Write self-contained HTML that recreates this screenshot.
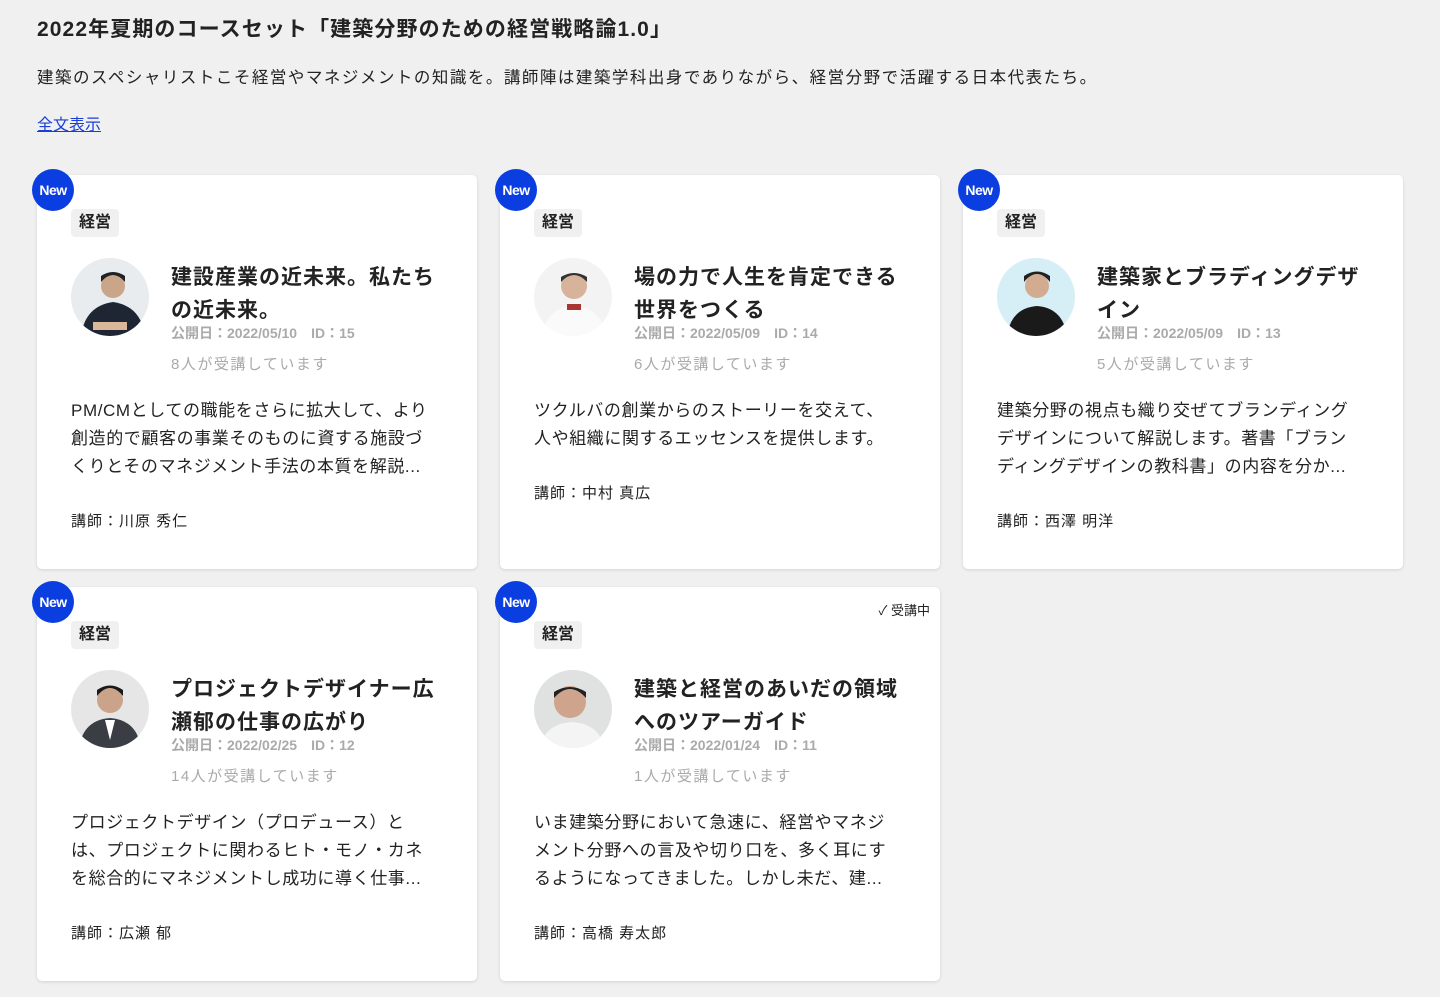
<!DOCTYPE html>
<html><head><meta charset="utf-8"><style>
*{box-sizing:border-box;margin:0;padding:0}
body{width:1440px;height:997px;background:#f0f0f0;font-family:"Liberation Sans","Noto Sans CJK JP",sans-serif;color:#222;position:relative;overflow:hidden}
h1{position:absolute;left:37px;top:13px;font-size:21px;font-weight:bold;color:#222;letter-spacing:1.1px}
.sub{position:absolute;left:37px;top:64px;font-size:16.5px;color:#222;letter-spacing:1.5px}
.link{position:absolute;left:37px;top:111px;font-size:16px;color:#1a3fd6;text-decoration:underline}
.card{position:absolute;width:440px;height:394px;background:#fff;border-radius:5px;box-shadow:0 1px 3px rgba(0,0,0,.12)}
.new{position:absolute;left:-5px;top:-6px;width:42px;height:42px;border-radius:50%;background:#0a3ee0;color:#fff;font-weight:bold;font-size:14px;line-height:42px;text-align:center;letter-spacing:-.5px}
.tag{position:absolute;left:34px;top:34px;height:28px;padding:0 8px;background:#f0f0f0;border-radius:4px;font-size:16px;font-weight:bold;line-height:28px}
.av{position:absolute;left:34px;top:83px;width:78px;height:78px;border-radius:50%;overflow:hidden}
.title{position:absolute;left:134px;top:86px;width:272px;font-size:21px;font-weight:bold;line-height:33px;color:#222;letter-spacing:1px}
.meta{position:absolute;left:134px;top:148px;font-size:14px;font-weight:bold;color:#aaa}
.cnt{position:absolute;left:134px;top:178px;font-size:15px;color:#aaa;letter-spacing:1.5px}
.desc{position:absolute;left:34px;top:222px;width:366px;font-size:17px;line-height:28px;color:#222;letter-spacing:.6px}
.ins{position:absolute;left:34px;font-size:15px;color:#222;letter-spacing:1px}
.taking{position:absolute;right:10px;top:13px;font-size:13px;color:#222}
</style></head><body>
<h1>2022年夏期のコースセット「建築分野のための経営戦略論1.0」</h1>
<div class="sub">建築のスペシャリストこそ経営やマネジメントの知識を。講師陣は建築学科出身でありながら、経営分野で活躍する日本代表たち。</div>
<div class="link">全文表示</div>

<div class="card" style="left:37px;top:175px">
<div class="new">New</div><div class="tag">経営</div>
<div class="av"><svg width="78" height="78"><rect width="78" height="78" fill="#e8ecef"/><circle cx="42" cy="28" r="12" fill="#c9a58a"/><path d="M30 24q12-14 24 0v-6q-12-8-24 0z" fill="#222"/><path d="M10 78q4-30 32-34q28 4 32 34z" fill="#1f2633"/><rect x="22" y="64" width="34" height="8" fill="#d9b89a"/></svg></div>
<div class="title">建設産業の近未来。私たちの近未来。</div>
<div class="meta">公開日：2022/05/10　ID：15</div>
<div class="cnt">8人が受講しています</div>
<div class="desc">PM/CMとしての職能をさらに拡大して、より創造的で顧客の事業そのものに資する施設づくりとそのマネジメント手法の本質を解説...</div>
<div class="ins" style="top:335px">講師：川原 秀仁</div>
</div>

<div class="card" style="left:500px;top:175px">
<div class="new">New</div><div class="tag">経営</div>
<div class="av"><svg width="78" height="78"><rect width="78" height="78" fill="#f3f3f3"/><circle cx="40" cy="28" r="13" fill="#d6b39a"/><path d="M27 24q13-14 26 0v-5q-13-8-26 0z" fill="#333"/><path d="M8 78q4-28 32-30q28 2 32 30z" fill="#fafafa"/><rect x="33" y="46" width="14" height="6" fill="#a33"/></svg></div>
<div class="title">場の力で人生を肯定できる世界をつくる</div>
<div class="meta">公開日：2022/05/09　ID：14</div>
<div class="cnt">6人が受講しています</div>
<div class="desc">ツクルバの創業からのストーリーを交えて、人や組織に関するエッセンスを提供します。</div>
<div class="ins" style="top:307px">講師：中村 真広</div>
</div>

<div class="card" style="left:963px;top:175px">
<div class="new">New</div><div class="tag">経営</div>
<div class="av"><svg width="78" height="78"><rect width="78" height="78" fill="#d6eef5"/><circle cx="40" cy="28" r="12" fill="#d2ab90"/><path d="M27 24q13-16 26 0v-6q-13-9-26 0z" fill="#222"/><path d="M10 78q4-28 30-30q26 2 30 30z" fill="#1a1a1a"/></svg></div>
<div class="title">建築家とブラディングデザイン</div>
<div class="meta">公開日：2022/05/09　ID：13</div>
<div class="cnt">5人が受講しています</div>
<div class="desc">建築分野の視点も織り交ぜてブランディングデザインについて解説します。著書「ブランディングデザインの教科書」の内容を分か...</div>
<div class="ins" style="top:335px">講師：西澤 明洋</div>
</div>

<div class="card" style="left:37px;top:587px">
<div class="new">New</div><div class="tag">経営</div>
<div class="av"><svg width="78" height="78"><rect width="78" height="78" fill="#e6e6e6"/><circle cx="39" cy="30" r="13" fill="#caa38a"/><path d="M26 26q13-16 26 0v-6q-13-9-26 0z" fill="#1a1a1a"/><path d="M8 78q4-28 31-30q27 2 31 30z" fill="#3a3d44"/><path d="M34 50l5 20l5-20z" fill="#fff"/></svg></div>
<div class="title">プロジェクトデザイナー広瀬郁の仕事の広がり</div>
<div class="meta">公開日：2022/02/25　ID：12</div>
<div class="cnt">14人が受講しています</div>
<div class="desc">プロジェクトデザイン（プロデュース）とは、プロジェクトに関わるヒト・モノ・カネを総合的にマネジメントし成功に導く仕事...</div>
<div class="ins" style="top:335px">講師：広瀬 郁</div>
</div>

<div class="card" style="left:500px;top:587px">
<div class="new">New</div><div class="taking">✓ 受講中</div><div class="tag">経営</div>
<div class="av"><svg width="78" height="78"><rect width="78" height="78" fill="#dfe2e0"/><circle cx="36" cy="32" r="16" fill="#cfa48c"/><path d="M20 28q16-18 32 0v-6q-16-10-32 0z" fill="#222"/><path d="M6 78q4-24 32-26q28 2 32 26z" fill="#f4f4f4"/></svg></div>
<div class="title">建築と経営のあいだの領域へのツアーガイド</div>
<div class="meta">公開日：2022/01/24　ID：11</div>
<div class="cnt">1人が受講しています</div>
<div class="desc">いま建築分野において急速に、経営やマネジメント分野への言及や切り口を、多く耳にするようになってきました。しかし未だ、建...</div>
<div class="ins" style="top:335px">講師：高橋 寿太郎</div>
</div>
</body></html>
